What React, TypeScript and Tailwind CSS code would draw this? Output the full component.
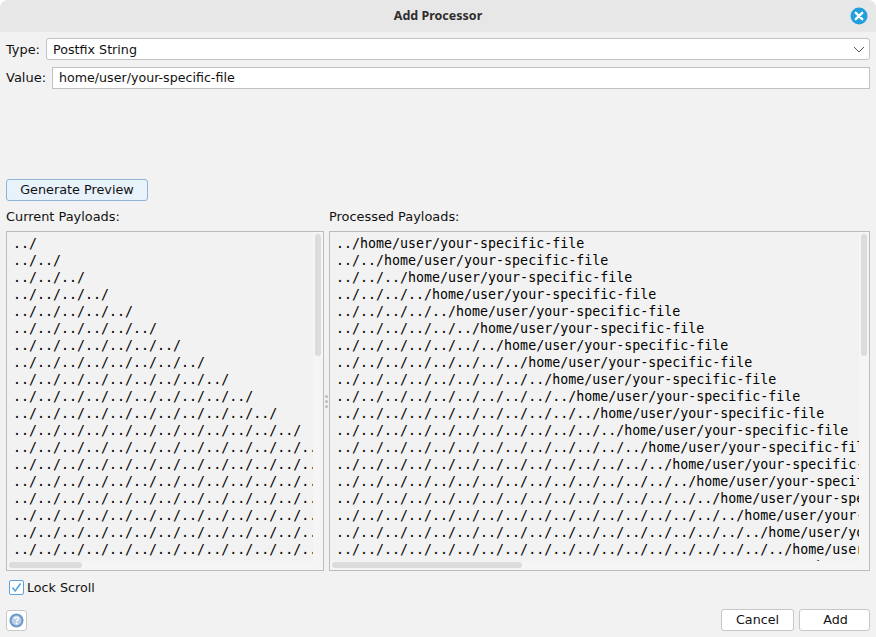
import React from "react";

const ui = "font-['DejaVu_Sans',sans-serif]";
const mono = "font-['DejaVu_Sans_Mono',monospace]";

const left = Array.from({ length: 20 }, (_, i) => "../".repeat(i + 1));
const right = Array.from({ length: 20 }, (_, i) => "../".repeat(i + 1) + "home/user/your-specific-file");

function Pane({ rows, className, hbarW }: { rows: string[]; className: string; hbarW: string }) {
  return (
    <div className={`relative h-[340px] border border-[#bdbdbd] overflow-hidden ${className}`}>
      <div className="h-[329px] pt-[3px] overflow-hidden">
        {rows.map((r, i) => (
          <div key={i} className={`${mono} h-[17px] leading-[17px] text-[13.3px] pl-[6px] text-black whitespace-pre`}>
            {r}
          </div>
        ))}
      </div>
      <div className="absolute right-0 top-0 bottom-0 w-[10px] bg-[#f5f5f5]" />
      <div className="absolute left-0 right-0 bottom-0 h-[9px] bg-[#f5f5f5]" />
      <div className="absolute top-[2px] right-[2px] w-[6px] h-[122px] rounded-full bg-[#dcdcdc]" />
      <div className={`absolute left-[2px] bottom-[2px] h-[6px] rounded-full bg-[#dcdcdc] ${hbarW}`} />
    </div>
  );
}

export default function App() {
  return (
    <div className={`${ui} w-[876px] h-[637px] flex flex-col bg-[#f2f2f2] rounded-t-[8px] overflow-hidden text-[12.7px] text-[#111]`}>
      <div className="relative h-[32px] shrink-0 bg-[#e7e7e7] flex items-center justify-center pt-[1px]">
        <span className="font-['Noto_Sans',sans-serif] font-bold text-[12.5px] text-[#2e2e2e]">Add Processor</span>
        <svg className="absolute right-[8px] top-[7px]" width="18" height="18" viewBox="0 0 18 18">
          <circle cx="9" cy="9" r="8.5" fill="#239fdd" />
          <path d="M5.8 5.8 12.2 12.2M12.2 5.8 5.8 12.2" stroke="#fff" strokeWidth="2.4" strokeLinecap="round" />
        </svg>
      </div>

      <div className="flex-1 flex flex-col px-[6px]">
        <div className="flex items-center mt-[6px] h-[22px]">
          <span className="w-[40px] pt-[1px] text-[12.9px]">Type:</span>
          <div className="flex-1 h-[22px] bg-white border border-[#c2c2c2] rounded-[3px] flex items-center justify-between pl-[6px] pr-[4px]">
            <span className="pt-[1px]">Postfix String</span>
            <svg width="12" height="7" viewBox="0 0 12 7" fill="none">
              <path d="M1 1 6 6 11 1" stroke="#555" strokeWidth="1" />
            </svg>
          </div>
        </div>

        <div className="flex items-center mt-[7px] h-[22px]">
          <span className="w-[46px] text-[13px]">Value:</span>
          <div className="flex-1 h-[22px] bg-white border border-[#c2c2c2] flex items-center pl-[6px] text-[12.65px]">
            home/user/your-specific-file
          </div>
        </div>

        <button className="mt-[90px] w-[142px] h-[22px] bg-[#e8f2fb] border border-[#8db4d8] rounded-[3px] flex items-center justify-center text-[12.8px]">
          Generate Preview
        </button>

        <div className="flex mt-[7px] h-[16px] items-center pt-[1px] text-[12.9px]">
          <span className="w-[323px]">Current Payloads:</span>
          <span>Processed Payloads:</span>
        </div>

        <div className="flex mt-[7px]">
          <Pane rows={left} className="w-[318px]" hbarW="w-[73px]" />
          <div className="w-[5px] flex flex-col items-center justify-center gap-[2px]">
            <span className="w-[3px] h-[3px] rounded-full bg-[#bcbcbc]" />
            <span className="w-[3px] h-[3px] rounded-full bg-[#bcbcbc]" />
            <span className="w-[3px] h-[3px] rounded-full bg-[#bcbcbc]" />
          </div>
          <Pane rows={right} className="w-[541px]" hbarW="w-[190px]" />
        </div>

        <div className="flex items-center mt-[7px] h-[18px] pl-[3px]">
          <span className="w-[15px] h-[15px] rounded-[2px] border border-[#5ba3e6] bg-white flex items-center justify-center">
            <svg width="11" height="11" viewBox="0 0 11 11" fill="none">
              <path d="M1.5 5.5 4.2 9 9.5 1.5" stroke="#5ba3e6" strokeWidth="1.6" />
            </svg>
          </span>
          <span className="ml-[3px] pt-[1px]">Lock Scroll</span>
        </div>

        <div className="flex items-center justify-between mt-[13px] h-[22px]">
          <button className="w-[21px] h-[21px] bg-white border border-[#c8c8c8] rounded-[3px] flex items-center justify-center">
            <svg width="15" height="15" viewBox="0 0 15 15">
              <circle cx="7.5" cy="7.5" r="7" fill="#6d97c8" />
              <circle cx="7.5" cy="7.5" r="5" fill="#b9cfe8" />
              <path d="M5.6 6c0-2.4 3.8-2.4 3.8-.3 0 1.3-1.9 1.3-1.9 2.8" fill="none" stroke="#fff" strokeWidth="1.4" />
              <circle cx="7.5" cy="10.5" r="0.9" fill="#fff" />
            </svg>
          </button>
          <div className="flex gap-[5px]">
            <button className="w-[73px] h-[22px] bg-white border border-[#c8c8c8] rounded-[3px]">Cancel</button>
            <button className="w-[71px] h-[22px] bg-white border border-[#c8c8c8] rounded-[3px] pl-[2px]">Add</button>
          </div>
        </div>
      </div>
    </div>
  );
}
